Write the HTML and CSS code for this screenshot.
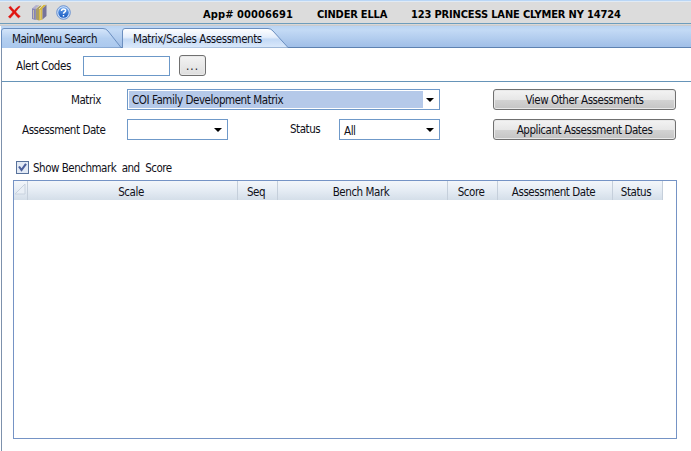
FILE: index.html
```html
<!DOCTYPE html>
<html lang="en">
<head>
<meta charset="utf-8">
<title>Matrix/Scales Assessments</title>
<link rel="stylesheet" href="styles.css">
</head>
<body>
<header class="toolbar">
  <div class="tools">
    <svg width="13" height="14" viewBox="0 0 13 14"><path d="M.8 2.4 2.6 1.2C3.8 2.8 5 4.2 6.4 5.4 7.7 3.8 9.2 2 11.2 1L12.1 1.7C10.5 3.2 9 5 7.8 6.8 9 8.5 10.4 10 12.4 11.3L10.4 13C8.8 11.6 7.5 10.1 6.3 8.5 5.1 10 3.9 11.7 2.2 13.2L.3 11.8C2 10.3 3.4 8.7 4.7 6.9 3.2 5.5 1.9 4 .8 2.4Z" fill="#e01410" stroke="#e01410" stroke-width=".4"/></svg>
    <svg width="16" height="17" viewBox="0 0 16 17"><path d="M1 4.5 5 1 8 1.5 4.5 5V15.5L1 14.5Z" fill="#b3b0d0"/><path d="M4.5 5 8 1.5V13L4.5 16Z" fill="#74749f"/><path d="M1 4.5 4.5 5V16L1 15Z" fill="#8585b5"/><path d="M5 5 8.5 1.5 11.5 2 8 5.5V16.5L5 15.5Z" fill="#a99c68"/><path d="M8 5 12 1 15.5 .7 11.5 4.5V15.5L8 16.5Z" fill="#d8b940"/><path d="M11.5 4.5 15.5 .7V12L11.5 15.5Z" fill="#77739a"/><path d="M2.5 6V14.5M9.7 6V15.5" stroke="#e3d9a0" stroke-width=".7"/><path d="M5 4.5 9 1.2M8 5 12 1" stroke="#efe9c7" stroke-width=".8"/></svg>
    <svg width="15" height="15" viewBox="0 0 15 15"><defs><linearGradient id="g" x2="0" y2="1"><stop stop-color="#6da5ec"/><stop offset="1" stop-color="#1457c0"/></linearGradient></defs><circle cx="7.5" cy="7.5" r="6.8" fill="#c8dcf8" stroke="#4f7fca" stroke-width=".8"/><circle cx="7.5" cy="7.5" r="5.2" fill="url(#g)"/><path d="M5.5 6.1C5.5 3.3 9.6 3.3 9.6 5.8 9.6 7.2 7.5 7.2 7.5 8.7M7.5 10V11.4" fill="none" stroke="#fff" stroke-width="1.5"/></svg>
  </div>
  <span class="app">App# 00006691</span><span class="name">CINDER ELLA</span><span class="addr">123 PRINCESS LANE CLYMER NY 14724</span>
</header>
<main class="window">
  <nav class="tabs">
    <div class="tab first"><svg class="shape" width="121" height="20" viewBox="0 0 121 20"><defs><linearGradient id="a" x2="0" y2="1"><stop stop-color="#d6e6fa"/><stop offset=".5" stop-color="#b4cff0"/><stop offset="1" stop-color="#aac8ee"/></linearGradient></defs><path d="M.5 20V3Q.5.5 3 .5H102Q105 .5 107 3L120 19.5" fill="url(#a)" stroke="#6b8fc0"/></svg><span>MainMenu Search</span></div>
    <div class="tab second"><svg class="shape" width="167" height="20" viewBox="0 0 167 20"><defs><linearGradient id="b" x2="0" y2="1"><stop stop-color="#fff"/><stop offset=".45" stop-color="#e3edfb"/><stop offset=".55" stop-color="#c3d9f5"/><stop offset="1" stop-color="#dceafb"/></linearGradient></defs><path d="M.5 20V3Q.5.5 3 .5H146Q149 .5 151 3L166 19.5" fill="url(#b)" stroke="#6b8fc0"/></svg><span>Matrix/Scales Assessments</span></div>
  </nav>
  <section class="alert"><label>Alert Codes</label><div class="input"></div><button class="more">...</button></section>
  <section class="filters">
    <label class="l-matrix">Matrix</label>
    <div class="combo matrix"><span>COI Family Development Matrix</span><i></i></div>
    <button class="view">View Other Assessments</button>
    <label class="l-date">Assessment Date</label>
    <div class="combo date"><i></i></div>
    <label class="l-status">Status</label>
    <div class="combo status"><span>All</span><i></i></div>
    <button class="dates">Applicant Assessment Dates</button>
  </section>
  <label class="check"><span class="box"><svg width="11" height="11" viewBox="0 0 11 11"><path d="M2 4.5 4.5 8 9 1.8" fill="none" stroke="#4b5f9b" stroke-width="2.1"/></svg></span><span>Show Benchmark&nbsp; and&nbsp; Score</span></label>
  <section class="grid">
    <div class="head">
      <div><svg width="12" height="12" viewBox="0 0 12 12"><path d="M1 11 11 1V11Z" fill="#e9eff6" stroke="#c8d2df"/></svg></div>
      <div>Scale</div><div>Seq</div><div>Bench Mark</div><div>Score</div><div>Assessment Date</div><div>Status</div>
    </div>
  </section>
</main>
</body>
</html>
```
FILE: styles.css
```css
* { box-sizing: border-box; }
body { margin: 0; width: 691px; height: 451px; overflow: hidden; background: #fff; color: #101018; font: 11.5px/14px "DejaVu Sans Condensed", "DejaVu Sans", sans-serif; font-stretch: condensed; letter-spacing: -.45px; white-space: nowrap; }
svg { display: block; }
.toolbar { height: 26px; padding: 3px 0 0 2px; display: flex; background: linear-gradient(#b9d6f6 0 1px, #e1ebf5 1px 2px, #dcdcdc 2px 23px, #6d9dbd 23px 24px, #dbd7d4 24px 25px, #c6cbd2 25px); font-weight: bold; font-size: 11px; letter-spacing: -.15px; color: #000; }
.tools { display: flex; align-items: center; width: 201px; height: 18px; padding-left: 6px; gap: 10px; }
.tools svg:last-child { margin-left: -1px; }
.toolbar span { padding-top: 5px; }
.toolbar .app { width: 114px; letter-spacing: .1px; }
.name { width: 94px; letter-spacing: -.2px; }
.window { margin-left: 1px; height: 425px; border-left: 1px solid #7d91ac; }
.tabs { height: 22px; margin-left: -1px; padding-top: 1px; display: flex; background: linear-gradient(#bad4f2, #c3daf5 4px, #a2c0e8 20px); border-bottom: 1px solid #5e82b1; }
.tab { position: relative; height: 20px; padding-top: 4px; margin-top: 1px; }
.tab span { position: relative; }
.shape { position: absolute; left: 0; top: 0; }
.first { width: 121px; padding-left: 11px; }
.second { width: 167px; padding-left: 11px; }
.alert { height: 34px; border-bottom: 1px solid #6694b8; display: flex; align-items: flex-start; padding: 7px 0 0 14px; }
.alert label { width: 67px; padding-top: 4px; }
.input { width: 87px; height: 20px; border: 1px solid #6c98c8; margin-top: 1px; }
button { font: inherit; letter-spacing: inherit; color: inherit; height: 21px; padding: 1px 0 0; border: 1px solid #707070; border-radius: 3px; background: linear-gradient(#f3f3f3, #e7e7e7 50%, #d2d2d2 55%, #c4c4c4); box-shadow: inset 0 0 0 1px #e9e9e9; }
.alert .more { width: 27px; margin-left: 9px; background: linear-gradient(#f3f3f3, #dedede); letter-spacing: 1px; }
.filters { display: grid; grid-template-columns: 106px 19px 101px 63px 48px 101px 53px 183px; grid-template-rows: 21px 21px; row-gap: 9px; padding-top: 7px; }
.filters label { padding-top: 4px; }
.l-matrix { grid-column: 1; padding-left: 69px; }
.l-date { grid-column: 1; padding-left: 20px; }
.filters .l-status { grid-column: 4; padding: 3px 0 0 62px; }
.matrix { grid-column: 3 / 7; }
.date { grid-column: 3; }
.status { grid-column: 6; }
.view, .dates { grid-column: 8; }
.combo { border: 1px solid #6f99c9; display: flex; align-items: center; padding: 1px; width: 101px; }
.combo span { flex: 1; padding: 2px 0 0 3px; }
.matrix { width: 313px; letter-spacing: -.43px; }
.matrix span { height: 17px; background: #b5c9e9; }
.combo i { margin: 0 4px 0 auto; border: 4px solid transparent; border-top-color: #000; border-bottom: 0; }
.matrix i { margin-left: 3px; }
.check { display: flex; padding: 21px 0 0 14px; letter-spacing: -.5px; }
.box { width: 13px; height: 13px; border: 1px solid #58729b; background: #e3eaf5; margin-right: 4px; }
.grid { margin: 5px 0 0 11px; width: 664px; height: 259px; border: 1px solid #7593c5; }
.head { width: 649px; height: 19px; display: grid; grid-template-columns: 14px 210px 40px 170px 50px 115px 50px; background: linear-gradient(#f3f6fa, #e5ecf4 50%, #d4dee9); text-align: center; }
.head div { border-right: 1px solid #c5cfdb; padding: 4px 3px 0 0; }
.head div:first-child { padding: 2px 0 0; }
```
